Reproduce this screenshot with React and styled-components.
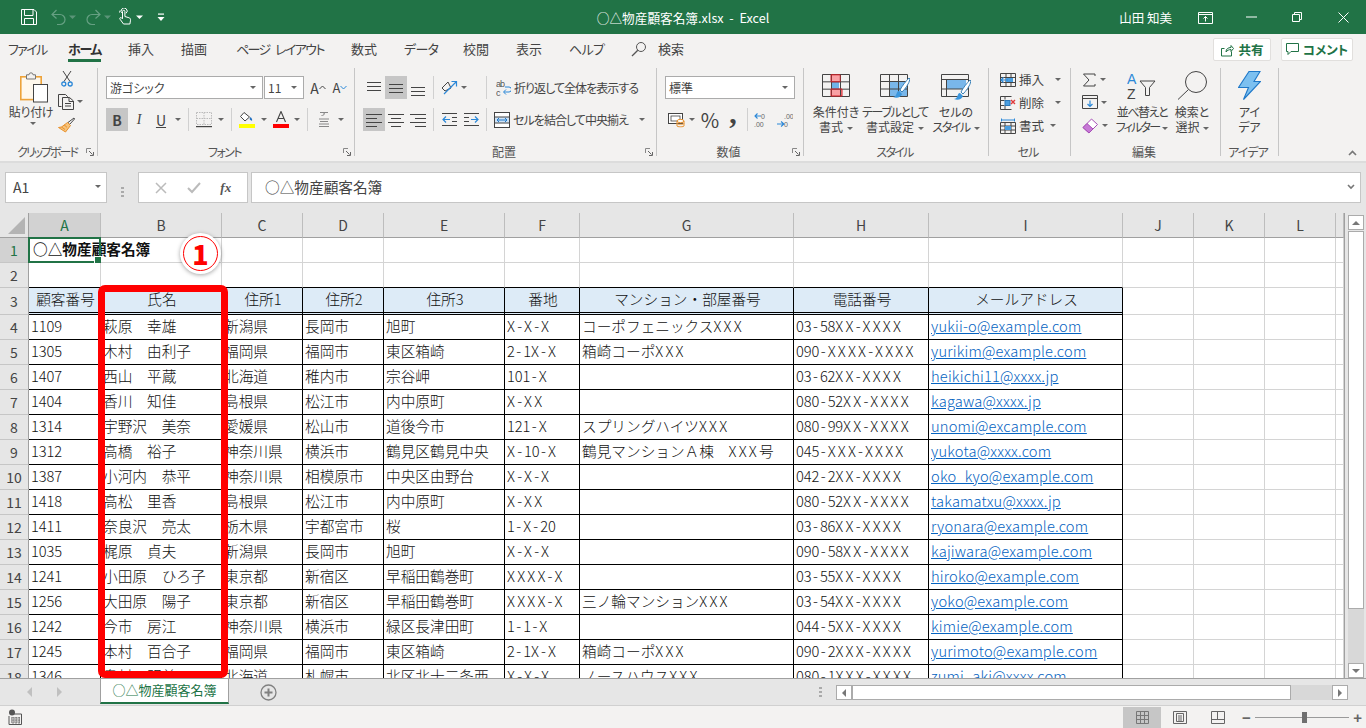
import React from "react";
import styled, { createGlobalStyle } from "styled-components";

const UI = `"Noto Sans CJK JP", "Noto Sans", sans-serif`;
const GREEN = "#217346";

const Global = createGlobalStyle`
  html, body { margin: 0; padding: 0; overflow: hidden; background: #e6e6e6; }
  * { box-sizing: border-box; }
`;

const Page = styled.div`
  width: 1366px; height: 728px; position: relative; overflow: hidden;
  display: flex; flex-direction: column;
  font-family: ${UI}; font-size: 12px; color: #444;
  font-feature-settings: "palt";
`;
const Kana = styled.span`letter-spacing: ${p => p.$ls ?? -1.5}px;`;

/* ---------- title bar ---------- */
const TitleBar = styled.header`
  height: 34px; flex: none; background: ${GREEN}; color: #fff;
  display: grid; grid-template-columns: 1fr auto 1fr; align-items: center;
`;
const Qat = styled.div`display: flex; align-items: center; padding-left: 21px;`;
const QatSlot = styled.span`display: flex; margin-left: ${p => p.$ml || 0}px;`;
const TitleText = styled.div`font-size: 12.67px; white-space: pre; font-feature-settings: normal;`;
const TitleRight = styled.div`display: flex; align-items: center; justify-content: flex-end;`;
const UserName = styled.span`font-size: 12.5px; margin-right: 10px;`;
const WinBtn = styled.span`width: 46px; height: 34px; display: flex; align-items: center; justify-content: center;`;

/* ---------- tabs ---------- */
const TabRow = styled.nav`
  height: 32px; flex: none; background: #f3f2f1; display: flex; align-items: flex-start; padding-left: 8px;
`;
const Tab = styled.span`
  width: ${p => p.$w}px; height: 28px; flex: none; font-size: 13px; line-height: 30px; white-space: nowrap; color: #444;
`;
const TabLabel = styled.span`
  display: inline-block; height: 28px;
  font-weight: ${p => (p.$on ? 700 : 400)}; color: ${p => (p.$on ? "#333" : "#444")};
  letter-spacing: ${p => p.$ls || 0}px; word-spacing: 4px;
  border-bottom: 3px solid ${p => (p.$on ? GREEN : "transparent")};
`;
const TabIcon = styled.span`width: 27px; flex: none; margin-top: 7px; display: flex;`;
const ShareArea = styled.div`margin-left: auto; display: flex; gap: 10px; padding: 4px 13px 0 0;`;
const ShareBtn = styled.span`
  height: 23px; width: ${p => p.$w}px; background: #fff; border: 1px solid #e1dfdd; border-radius: 2px;
  display: flex; align-items: center; justify-content: center; gap: 4px;
  font-weight: 700; font-size: 12.5px; color: ${p => p.$c};
`;

/* ---------- ribbon ---------- */
const Ribbon = styled.section`
  height: 95px; flex: none; background: #f3f2f1; display: flex; padding: 2px 0 5px; position: relative;
`;
const Group = styled.div`
  width: ${p => p.$w}px; height: 88px; flex: none; border-right: 1px solid #c6c6c6;
  display: grid; grid-template-rows: 76px 12px;
`;
const GroupBody = styled.div`
  display: flex; padding: ${p => p.$pad || "0"}; flex-direction: ${p => p.$dir || "row"};
`;
const GroupLabel = styled.div`
  display: grid; grid-template-columns: 1fr auto 1fr; align-items: center; height: 16px; line-height: 16px;
  font-size: 12px; color: #555; padding-right: 3px; white-space: nowrap;
`;
const LabelText = styled.span`grid-column: 2; letter-spacing: ${p => p.$ls || 0}px;`;
const Launcher = styled.span`justify-self: end; display: flex;`;
const Rows = styled.div`display: flex; flex-direction: column; gap: 9px;`;
const ToolRow = styled.div`display: flex; align-items: center; height: 23px;`;
const Btn = styled.span`
  width: ${p => p.$w || 22}px; height: 23px; flex: none; display: flex; align-items: center; justify-content: center;
  background: ${p => (p.$on ? "#c6c6c6" : "transparent")}; color: #444;
  margin-left: ${p => p.$ml || 0}px;
`;
const BtnText = styled.span`
  font-family: ${p => (p.$serif ? `"Liberation Serif", serif` : UI)};
  font-size: ${p => p.$s || 14}px; font-weight: ${p => (p.$b ? 700 : 400)};
  font-style: ${p => (p.$i ? "italic" : "normal")};
  text-decoration: ${p => (p.$u ? "underline" : "none")};
`;
const CommaText = styled.span`
  font-family: "Liberation Serif", serif; font-size: 30px; font-weight: 700; line-height: 23px; height: 23px; margin-top: -14px; color: #444;
`;
const CaretBox = styled.span`
  width: ${p => p.$w || 12}px; height: 23px; flex: none; display: flex; align-items: center; justify-content: center;
  margin-left: ${p => p.$ml || 0}px;
`;
const Caret = styled.i`
  display: inline-block; width: 0; height: 0; flex: none; vertical-align: middle;
  border-left: 3px solid transparent; border-right: 3px solid transparent; border-top: 3px solid #666;
  margin-left: ${p => p.$ml || 0}px;
`;
const VSep = styled.span`
  width: 1px; height: 23px; flex: none; background: #d0d0d0; margin: 0 ${p => p.$r ?? 4}px 0 ${p => p.$l ?? 4}px;
`;
const Select = styled.span`
  width: ${p => p.$w}px; height: 23px; background: #fff; border: 1px solid #ababab; flex: none;
  display: flex; align-items: center; padding: 0 4px 0 3px; margin-left: ${p => p.$ml || 0}px;
  font-size: 12px; color: #444;
  i { margin-left: auto; margin-right: 2px; }
`;
const TextBtn = styled.span`
  display: flex; align-items: center; gap: 3px; white-space: nowrap; font-size: 12px; color: #444;
  letter-spacing: -0.95px; margin-left: ${p => p.$ml || 0}px;
`;
const PasteBtn = styled.div`
  width: 50px; flex: none; display: flex; flex-direction: column; align-items: center; padding-top: 4px;
  line-height: 15px; font-size: 12px; color: #444; white-space: nowrap;
`;
const PasteIconWrap = styled.span`display: flex; margin-left: 5px;`;
const PasteLabel = styled.span`margin-top: 1px; letter-spacing: -0.3px;`;
const PasteCaret = styled.span`display: flex; margin-top: 3px; margin-left: 3px;`;
const SmallCol = styled.div`
  display: flex; flex-direction: column; padding-top: ${p => p.$pt || 2}px; gap: ${p => p.$gap || 6}px;
  margin-left: ${p => p.$ml || 0}px; width: ${p => (p.$w ? `${p.$w}px` : "auto")}; flex: none;
`;
const SmallItem = styled.span`display: flex; align-items: center; height: 17px;`;
const CutSlot = styled.span`display: flex; padding-left: 3px;`;
const BigBtn = styled.div`
  width: ${p => p.$w}px; flex: none; display: flex; flex-direction: column; align-items: center; padding-top: ${p => p.$pt ?? 6}px;
  font-size: 12px; line-height: 15px; color: #444; text-align: center; white-space: nowrap;
`;
const BigLabel = styled.div`margin-top: ${p => p.$mt ?? 6}px;`;
const CellRow = styled.div`
  display: flex; align-items: center; height: 23px; gap: 3px; font-size: 12.5px; color: #444; white-space: nowrap;
`;
const Collapse = styled.span`position: absolute; right: 9px; bottom: 5px; display: flex;`;

/* ---------- formula bar ---------- */
const FormulaStrip = styled.div`
  height: 52px; flex: none; background: #e6e6e6; display: flex;
  border-top: 2px solid #dcdcdc; padding: 9px 5px 0;
`;
const Box = styled.div`
  height: 31px; background: #fff; border: 1px solid #c6c6c6; display: flex; align-items: center;
`;
const NameBox = styled(Box)`
  width: 102px; padding: 0 5px 2px 7px; justify-content: space-between; font-size: 14px; color: #444;
`;
const Dots = styled.span`
  width: 31px; display: flex; align-items: center; justify-content: center; flex: none;
`;
const FxBox = styled(Box)`
  width: 110px; justify-content: space-around; padding: 0 6px; margin-right: 3px;
`;
const FxText = styled.span`font-family: "Liberation Serif", serif; font-style: italic; font-weight: 700; font-size: 13px; color: #555;`;
const FormulaInput = styled(Box)`
  flex: 1; padding: 0 5px 2px 13px; font-size: 14.67px; color: #444; font-feature-settings: normal;
  justify-content: space-between;
`;

/* ---------- sheet ---------- */
const SheetArea = styled.div`
  height: 466px; flex: none; display: flex; position: relative; background: #e6e6e6;
  border-bottom: 1px solid #a0a0a0;
`;
const Grid = styled.div`
  width: 1345px; flex: none; background: #fff; border-right: 1px solid #a0a0a0; overflow: hidden;
  font-size: 14.67px; color: #111; font-feature-settings: normal; font-weight: 300;
`;
const COLS = "29px 72px 121px 81px 81px 121px 75px 214px 135px 194px 71px 71px 71px 8px";
const Row = styled.div`
  display: grid; grid-template-columns: ${COLS}; height: ${p => p.$h || 25}px;
`;
const ColHead = styled.div`
  background: ${p => (p.$sel ? "#d2d2d2" : "#e6e6e6")}; color: ${p => (p.$sel ? GREEN : "#444")};
  border-right: 1px solid #bdbdbd; border-bottom: 1px solid #a0a0a0;
  display: flex; align-items: center; justify-content: center; font-size: 14px; font-weight: 400;
`;
const Corner = styled(ColHead)`
  border-right: 1px solid #a0a0a0; align-items: flex-end; justify-content: flex-end; padding: 0 3px 3px 0;
`;
const RowHead = styled.div`
  background: ${p => (p.$sel ? "#d2d2d2" : "#e6e6e6")}; color: ${p => (p.$sel ? GREEN : "#444")};
  border-right: 1px solid #a0a0a0; border-bottom: 1px solid #c6c6c6;
  display: flex; align-items: center; justify-content: center; font-size: 14px; font-weight: 400;
`;
const Cell = styled.div`
  position: relative; white-space: nowrap; line-height: 22px;
  padding: 0 0 0 ${p => p.$pl ?? 2}px;
  overflow: ${p => (p.$spill ? "visible" : "hidden")};
  font-weight: ${p => (p.$b ? 700 : "inherit")};
  text-align: ${p => (p.$head ? "center" : "left")};
  background: ${p => (p.$head ? "#ddebf7" : "transparent")};
  border-right: 1px solid ${p => (p.$t ? "#000" : "#d4d4d4")};
  border-bottom: ${p => (p.$dbl ? "3px double #000" : `1px solid ${p.$bt ? "#000" : "#d4d4d4"}`)};
`;
const Run = styled.span`
  letter-spacing: ${p => p.$ls || 0}px; padding: 0 ${p => p.$pr || 0}px 0 ${p => p.$pl || 0}px;
`;
const Link = styled.span`color: #0563c1; text-decoration: underline; letter-spacing: 0.2px;`;
const Selection = styled.span`
  position: absolute; left: -1px; top: -1px; right: -1px; bottom: -1px; border: 2px solid ${GREEN}; pointer-events: none;
  &::after {
    content: ""; position: absolute; right: -3px; bottom: -3px; width: 6px; height: 6px;
    background: ${GREEN}; border: 1px solid #fff;
  }
`;
const VScroll = styled.div`
  flex: 1; padding: 2px 2px 0 3px; display: flex; flex-direction: column; background: #e6e6e6;
`;
const ScrollBtn = styled.span`
  height: 15px; flex: none; background: #fff; border: 1px solid #ababab; display: flex; align-items: center; justify-content: center;
`;
const VThumb = styled.span`height: 378px; flex: none; background: #fff; border: 1px solid #ababab; margin-top: 1px;`;
const VTrack = styled.span`flex: 1; background: #d8d8d8;`;
const RedBox = styled.div`
  position: absolute; left: 98px; top: 72px; width: 130px; height: 393px;
  border: 7px solid #ff0000; border-radius: 7px; pointer-events: none;
`;
const Badge = styled.div`
  position: absolute; left: 180px; top: 20px; width: 41px; height: 41px; border-radius: 50%;
  background: #fff; box-shadow: 0 1px 4px rgba(0,0,0,.35);
  display: flex; align-items: center; justify-content: center;
  &::before { content: ""; position: absolute; inset: 3px; border-radius: 50%; border: 1.5px solid #ff0000; }
  color: #ff0000; font-weight: 900; font-size: 27px; line-height: 1;
`;

/* ---------- sheet tabs ---------- */
const SheetBar = styled.div`
  height: 27px; flex: none; background: #e6e6e6; display: flex; align-items: flex-start;
  border-bottom: 1px solid #d0d0d0;
`;
const NavArrows = styled.div`
  width: 100px; height: 26px; flex: none; display: flex; align-items: center; padding-left: 27px; gap: 25px;
`;
const SheetTab = styled.div`
  width: 129px; height: 25px; flex: none; background: #fff; color: ${GREEN}; font-size: 13px; text-align: center; line-height: 22px;
  border-left: 1px solid #a0a0a0; border-right: 1px solid #a0a0a0; border-bottom: 2px solid ${GREEN};
  font-feature-settings: normal;
`;
const AddSheet = styled.span`margin: 5px 0 0 31px; display: flex;`;
const SheetDots = styled.span`margin: 8px 0 0 542px; width: 17px; display: flex; justify-content: flex-start;`;
const HScroll = styled.div`
  width: 512px; height: 15px; margin: 6px 0 0 0; display: flex; background: #d8d8d8;
`;
const HScrollBtn = styled(ScrollBtn)`width: 16px;`;
const HThumb = styled.span`width: 439px; background: #fff; border: 1px solid #ababab; flex: none;`;
const HTrack = styled.span`flex: 1;`;

/* ---------- status ---------- */
const StatusBar = styled.footer`
  flex: 1; background: #f3f2f1; display: flex; align-items: center; padding-left: 8px;
`;
const ViewBtn = styled.span`
  width: 38px; height: 21px; flex: none; display: flex; align-items: center; justify-content: center;
  background: ${p => (p.$on ? "#c6c6c6" : "transparent")};
`;
const Views = styled.div`margin-left: auto; display: flex; align-items: center;`;
const ZoomArea = styled.div`
  width: 129px; height: 21px; display: flex; align-items: center; position: relative; padding: 0 4px 0 5px;
`;
const ZoomLine = styled.span`flex: 1; height: 1px; background: #9a9a9a; margin: 0 4px; position: relative;`;
const ZoomThumb = styled.span`
  position: absolute; left: 47px; top: -5px; width: 5px; height: 11px; background: #6f6f6f;
`;
const ZoomSign = styled.span`font-size: 15px; font-weight: 700; color: #666; line-height: 1; font-family: "Liberation Sans", sans-serif;`;

/* ---------- icons ---------- */
const Svg = styled.svg`display: block; flex: none;`;
const Ic = ({ w = 16, h = 16, children, ...r }) => (
  <Svg width={w} height={h} viewBox={`0 0 ${w} ${h}`} fill="none" {...r}>{children}</Svg>
);
const D = "#444";
const SaveI = () => <Ic><path d="M.5.5h12.5l2.5 2.5v12.5H.5z M3.5.5v6h8.5v-6 M3.5 15.5v-6h9v6" stroke="#fff" /></Ic>;
const UndoI = ({ flip }) => (
  <Ic w={15} h={17} style={flip ? { transform: "scaleX(-1)" } : undefined}>
    <path d="M5.5 1 1 5.5l4.5 4 M1.5 5.5h7.5a4.8 4.8 0 0 1 0 10H6" stroke="#66a083" strokeWidth="1.2" />
  </Ic>
);
const TouchI = () => (
  <Ic w={14} h={18}>
    <path d="M4.5 5.5a3 3 0 1 1 3.5-.2M1.5 4.5a4.5 4 0 0 1 .6-2" stroke="#fff" />
    <path d="M4.5 3.5a1.2 1.2 0 0 1 2.4 0v5l4 1.2c1.3.4 1.8 1.3 1.6 2.5l-.6 3.8H5.5L2 11.2c-.8-1.2.6-2.2 1.6-1.3l.9.9z" stroke="#fff" />
  </Ic>
);
const QCaret = ({ c = "#fff" }) => <Ic w={8} h={5}><path d="M0 .5h7L3.5 4z" fill={c} /></Ic>;
const CustomizeI = () => <Ic w={8} h={9}><path d="M.5 4h7L4 8z" fill="#fff" /><rect x="1" y=".5" width="6" height="1.2" fill="#fff" /></Ic>;
const RibbonOpt = () => <Ic w={15} h={13}><path d="M.5 1.5h14v11H.5zM.5 3.5h14M7.5 10.5v-5M5.5 7.5l2-2 2 2" stroke="#fff" /></Ic>;
const MinI = () => <Ic w={11} h={2}><rect y=".5" width="11" height="1" fill="#fff" /></Ic>;
const RestoreI = () => <Ic w={10} h={10}><path d="M.5 2.5h7v7h-7zM2.5 2.5v-2h7v7h-2" stroke="#fff" /></Ic>;
const CloseI = () => <Ic w={11} h={11}><path d="M.5.5l10 10M10.5.5l-10 10" stroke="#fff" /></Ic>;
const SearchI = () => <Ic><circle cx="10" cy="6" r="4.5" stroke="#555" /><path d="M6.8 9.2 1 15" stroke="#555" strokeWidth="1.3" /></Ic>;
const ShareI = () => <Ic w={14} h={14}><path d="M11.5 8.5v4.5h-10V5.5h3M6 9c0-3 2-4.5 5-4.5V2.5l2.5 3-2.5 3V6.5C9 6.5 7 7.5 6 9z" stroke={GREEN} /></Ic>;
const CommentI = () => <Ic w={13} h={13}><path d="M.5.5h12v8H5l-3 3v-3H.5z" stroke={GREEN} /></Ic>;
const PasteI = () => (
  <Ic w={28} h={31}>
    <rect x=".8" y="4.8" width="20.4" height="22.8" fill="#fff8ec" stroke="#eda33a" strokeWidth="1.6" />
    <path d="M6.5 7V2.8H9a2 2 0 0 1 4 0h2.5V7z" fill="#f3f2f1" stroke="#777" />
    <rect x="13.5" y="12.5" width="14" height="17.5" fill="#fff" stroke="#444" />
  </Ic>
);
const CutI = () => (
  <Ic w={12} h={17}>
    <path d="M2 1 9 11.5M10 1 3 11.5" stroke={D} />
    <circle cx="2.8" cy="14" r="2" stroke="#2b88d8" strokeWidth="1.3" /><circle cx="9.2" cy="14" r="2" stroke="#2b88d8" strokeWidth="1.3" />
  </Ic>
);
const CopyI = () => <Ic><path d="M.5.5h7l2 2V3M.5.5v12h3" stroke={D} /><path d="M4.5 3.5h7l4 3.5v8.5h-11z M11 3.5v4h4M7 9.5h6M7 12h6" stroke={D} /></Ic>;
const BrushI = () => (
  <Ic w={17} h={16}>
    <path d="M16 1 10 5.5l1.5 2L16.5 2z" stroke={D} fill="#fff" />
    <path d="M9.5 5.5l3 3-5 6.5-7-4.5 3-.5z" fill="#f6c27a" stroke="#e8912c" />
    <path d="M3.5 10 7 12.5M6 7.8l3 2.5" stroke="#e8912c" />
  </Ic>
);
const Launch = () => <Ic w={8} h={8}><path d="M.5 5V.5H5" stroke="#888" /><path d="M3 3l3.5 3.5M7.5 4v3.5H4" stroke="#666" /></Ic>;
const Grow = ({ up }) => <Ic w={7} h={5}><path d={up ? "M.5 4 3.5 1l3 3" : "M.5 1l3 3 3-3"} stroke={up ? "#444" : "#2b88d8"} /></Ic>;
const BorderI = () => (
  <Ic>
    <path d="M.5.5h15v12H.5zM8 .5v12M.5 6.5h15" stroke="#bbb" strokeDasharray="1.5 1" />
    <rect y="14" width="16" height="1.2" fill={D} />
  </Ic>
);
const FillI = () => (
  <Ic w={16} h={17}>
    <path d="M5 1.5 1.5 5.5 6 10l4.5-4z" stroke={D} fill="#fff" />
    <path d="M11.5 6c1.5 1.5 2 3 1.5 3.5s-2-.5-2.5-1.5z" fill="#1f6fc0" />
    <rect y="13" width="16" height="4" fill="#ffff00" />
  </Ic>
);
const FontColorI = () => (
  <Ic w={16} h={17}>
    <path d="M3.5 11 8 .5 12.5 11M5 7.5h6" stroke={D} strokeWidth="1.1" />
    <rect y="13" width="16" height="4" fill="#ff0000" />
  </Ic>
);
const PhoneticI = () => (
  <Ic w={14} h={17}>
    <path d="M3 1.5h8M7 1.5v2M4.5 4.5c1.5 0 2.5-.5 3-2" stroke="#888" />
    <path d="M2 8h10M3 10.5h8M2 13h10" stroke="#888" /><rect x="2" y="15" width="10" height="1" fill="#888" />
  </Ic>
);
const lines = (arr) => arr.map((l, i) => <rect key={i} x={l[0]} y={l[1]} width={l[2]} height="1" fill={D} />);
const AlignI = ({ kind }) => {
  const m = {
    top: [[1, 2, 14], [1, 6, 14], [1, 10, 14]],
    mid: [[1, 4, 14], [1, 8, 14], [1, 12, 14]],
    bot: [[1, 7, 14], [1, 11, 14], [1, 15, 14]],
    left: [[0, 2, 16], [0, 6, 11], [0, 10, 16], [0, 14, 11]],
    center: [[0, 2, 16], [3, 6, 10], [0, 10, 16], [3, 14, 10]],
    right: [[0, 2, 16], [5, 6, 11], [0, 10, 16], [5, 14, 11]],
  };
  return <Ic>{lines(m[kind])}</Ic>;
};
const OrientI = () => (
  <Ic w={17} h={17}>
    <path d="M1 9 7 3l3 6-6 3z" stroke={D} />
    <path d="M3 15 15 3M10.5 2.5H15.5V7.5" stroke="#2b88d8" strokeWidth="1.2" />
  </Ic>
);
const IndentI = ({ inc }) => (
  <Ic w={15} h={13} style={inc ? { transform: "scaleX(-1)" } : undefined}>
    <path d="M1 6.5h7M4 3.5l-3 3 3 3" stroke="#2b88d8" strokeWidth="1.2" />
    <path d="M0 .5h15M10 4.5h5M10 8.5h5M0 12.5h15" stroke={D} />
  </Ic>
);
const WrapI = () => (
  <Ic w={15} h={18}>
    <text x="0" y="8" fontSize="9" fill="#555" fontFamily="Liberation Sans">ab</text>
    <text x="0" y="17" fontSize="9" fill="#555" fontFamily="Liberation Sans">c</text>
    <path d="M7 14h5a2.5 2.5 0 0 0 0-5H8M9 11.5 6.5 14 9 16.5" stroke="#2b88d8" transform="translate(1 -1)" />
  </Ic>
);
const MergeI = () => (
  <Ic w={16} h={16}>
    <rect x=".5" y=".5" width="15" height="15" stroke={D} fill="#fff" />
    <rect x="1" y="5" width="14" height="6" fill="#cfe3f6" /><path d="M.5 5h15M.5 11h15" stroke={D} />
    <path d="M3 8h10M5 6l-2 2 2 2M11 6l2 2-2 2" stroke="#1f78c8" />
  </Ic>
);
const CurrencyI = () => (
  <Ic w={17} h={17}>
    <rect x=".5" y="2.5" width="14" height="10" fill="#fff" stroke={D} />
    <rect x="3" y="5" width="9" height="5" stroke={D} strokeWidth=".8" />
    <ellipse cx="12.5" cy="10" rx="3.5" ry="1.6" fill="#fff" stroke="#e8912c" />
    <path d="M9 10v5c0 1 7 1 7 0v-5M9 12.5c0 1 7 1 7 0" stroke="#e8912c" fill="none" />
  </Ic>
);
const DecimalI = ({ inc }) => (
  <Ic w={16} h={16}>
    <text x="7" y="7" fontSize="7" fill="#666" fontFamily="Liberation Sans">{inc ? ".00" : "0"}</text>
    <text x={inc ? 7 : 0} y="15" fontSize="7" fill="#666" fontFamily="Liberation Sans">{inc ? "0" : ".00"}</text>
    <path d={inc ? "M0 12h7M4 9.5 7 12l-3 2.5" : "M1 4h6M3.5 1.5 1 4l2.5 2.5"} stroke="#2b88d8" strokeWidth="1.1" />
  </Ic>
);
const CondI = () => (
  <Ic w={28} h={23}>
    <rect x="9" y="1" width="8" height="7" fill="#f9a0a4" /><rect x="9" y="8" width="8" height="7" fill="#6fb3e8" /><rect x="9" y="15" width="11" height="7" fill="#f9a0a4" />
    <path d="M.5.5h27v22H.5zM.5 7.833h27M.5 15.167h27M9.5.5v22M18.5.5v22" stroke={D} />
    <path d="M9 .8h9v7H9zM9 15h11v7H9z" stroke="#d91d24" />
  </Ic>
);
const TableI = () => (
  <Ic w={30} h={26}>
    <rect x="9" y="8" width="18" height="14" fill="#79b7ea" />
    <path d="M.5.5h27v22H.5zM.5 7.5h27M.5 15h27M9.5.5v22M18.5.5v22" stroke={D} />
    <path d="M29 4c-3 3-7 8-9 12l2 2c3-3 7-8 8-13z" fill="#fff" stroke="#3b82b8" />
    <path d="M19 17c-2 0-2 2-3 4-.5 1-2 2-3 2 4 2 8 0 9-3z" fill="#3a96dd" />
  </Ic>
);
const CellStyleI = () => (
  <Ic w={30} h={27}>
    <rect x="5" y="6" width="20" height="9" fill="#79b7ea" />
    <path d="M.5.5h27v22H.5zM.5 5.5h27M.5 15h27M5.5 5.5v17" stroke={D} />
    <path d="M29 6c-3 3-7 8-9 12l2 2c3-3 7-8 8-13z" fill="#fff" stroke="#3b82b8" />
    <path d="M19 19c-2 0-2 2-3 4-.5 1-2 2-3 2 4 2 8 0 9-3z" fill="#3a96dd" />
  </Ic>
);
const InsertI = () => (
  <Ic w={16} h={14}>
    <path d="M.5.5h15v13H.5zM.5 4.5h15M.5 9.5h15M6 .5v13M11 .5v13" stroke={D} />
    <rect x="6" y="5" width="7" height="4" fill="#4a9ee0" />
    <path d="M1 7h7M3.5 4.5 1 7l2.5 2.5" stroke="#2b88d8" strokeWidth="1.2" fill="#f3f2f1" />
  </Ic>
);
const DeleteI = () => (
  <Ic w={16} h={14}>
    <path d="M.5.5h11M.5 13.5h11M.5.5v13M5 .5v3M5 10v3.5M.5 4.5h4M.5 9.5h4" stroke={D} />
    <rect x="5" y="4.5" width="5" height="5" fill="#4a9ee0" stroke="#2b78b8" />
    <path d="M11 4l4 4M15 4l-4 4" stroke="#e03a3a" strokeWidth="1.4" />
  </Ic>
);
const FormatI = () => (
  <Ic w={16} h={16}>
    <path d="M1.5.5v3M14.5.5v3M1.5 2h13" stroke="#2b88d8" />
    <path d="M.5 4.5h15v11H.5zM.5 8h15M.5 12h15M5 4.5v11M11 4.5v11" stroke={D} />
    <rect x="5" y="8" width="6" height="4" fill="#4a9ee0" />
  </Ic>
);
const SigmaI = () => <Ic w={14} h={14}><path d="M13 3V1H1.5L7 7l-5.5 6H13v-2" stroke={D} /></Ic>;
const FillDownI = () => <Ic w={16} h={15}><path d="M.5.5h15v13H.5zM.5 3.5h15" stroke={D} /><path d="M8 5.5v6M5.5 9 8 11.5 10.5 9" stroke="#2b88d8" strokeWidth="1.2" /></Ic>;
const EraserI = () => (
  <Ic w={17} h={16}>
    <path d="M1 9.5 9.5 1l6 5.5L7 15z" fill="#fff" stroke="#a64fb6" />
    <path d="M1 9.5 5 5.5l6 5.5-4 4z" fill="#c778d6" stroke="#a64fb6" />
  </Ic>
);
const SortI = () => (
  <Ic w={30} h={28}>
    <text x="0" y="12" fontSize="14" fill="#2b88d8" fontFamily="Liberation Sans">A</text>
    <text x="0" y="27" fontSize="14" fill={D} fontFamily="Liberation Sans">Z</text>
    <path d="M13 9h15l-5.5 6.5v8h-4v-8z" stroke={D} />
  </Ic>
);
const FindI = () => (
  <Ic w={31} h={29}>
    <circle cx="19" cy="11" r="10.5" stroke={D} />
    <path d="M11.5 18.5 1 28.5" stroke={D} />
  </Ic>
);
const IdeaI = () => (
  <Ic w={23} h={29}>
    <path d="M11 .5h11l-6 10h6.5L5.5 28.5l5-12H.5z" fill="#7cc0f0" stroke="#1f78c8" strokeWidth="1.1" />
  </Ic>
);
const Triangle = () => <Ic w={17} h={17}><path d="M17 0v17H0z" fill="#b4b4b4" /></Ic>;
const Tri = ({ dir, c = "#777", s = 4 }) => {
  const d = { up: `M0 ${s}H${s * 2}L${s} 0z`, down: `M0 0H${s * 2}L${s} ${s}z`, left: `M${s} 0V${s * 2}L0 ${s}z`, right: `M0 0V${s * 2}L${s} ${s}z` }[dir];
  const hor = dir === "left" || dir === "right";
  return <Ic w={hor ? s : s * 2} h={hor ? s * 2 : s}><path d={d} fill={c} /></Ic>;
};
const XI = () => <Ic w={12} h={12}><path d="M1 1l10 10M11 1 1 11" stroke="#bbb" strokeWidth="1.5" /></Ic>;
const CheckI = () => <Ic w={14} h={12}><path d="M1 6l4 4 8-9" stroke="#bbb" strokeWidth="2" /></Ic>;
const ChevronI = () => <Ic w={8} h={6}><path d="M1 1l3 3 3-3" stroke="#777" strokeWidth="1.6" /></Ic>;
const CollapseI = () => <Ic w={9} h={6}><path d="M1 5l3.5-3.5L8 5" stroke="#777" strokeWidth="1.6" /></Ic>;
const VDots = () => <Ic w={3} h={11}><path d="M0 0h3v2H0zM0 4h3v2H0zM0 8h3v2H0z" fill="#aaa" /></Ic>;
const AddI = () => (
  <Ic w={17} h={17}>
    <circle cx="8.5" cy="8.5" r="7.5" stroke="#808080" strokeWidth="1.3" />
    <path d="M4.5 8.5h8M8.5 4.5v8" stroke="#808080" strokeWidth="2" />
  </Ic>
);
const MacroI = () => (
  <Ic w={14} h={16}>
    <circle cx="4" cy="3.5" r="3" fill="#555" />
    <path d="M4 5h9.5v10.500H1V7" stroke="#555" />
    <path d="M3 9h9M3 11h9M3 13h9M5 8v7M8 8v7M11 8v7" stroke="#555" strokeDasharray="1 .6" />
  </Ic>
);
const NormalI = () => <Ic w={13} h={13}><path d="M.5.5h12v12H.5zM.5 4.5h12M.5 8.5h12M4.5.5v12M8.5.5v12" stroke="#777" /></Ic>;
const PageI = () => <Ic w={14} h={13}><path d="M.5.5h13v12H.5z M3.5 2.5h7v8h-7zM5 5h4M5 7h4M5 9h4" stroke="#666" /></Ic>;
const BreakI = () => <Ic w={14} h={13}><path d="M.5.5h13v12H.5zM.5 8.5h13M6.5.5v8" stroke="#666" /></Ic>;

/* ---------- data ---------- */
const COL_NAMES = ["A", "B", "C", "D", "E", "F", "G", "H", "I", "J", "K", "L", ""];
const HEAD = ["顧客番号", "氏名", "住所1", "住所2", "住所3", "番地", "マンション・部屋番号", "電話番号", "メールアドレス"];
const DATA = [
  [4, "1109", "萩原　幸雄", "新潟県", "長岡市", "旭町", "X-X-X", "コーポフェニックスXXX", "03-58XX-XXXX", "yukii-o@example.com"],
  [5, "1305", "木村　由利子", "福岡県", "福岡市", "東区箱崎", "2-1X-X", "箱崎コーポXXX", "090-XXXX-XXXX", "yurikim@example.com"],
  [6, "1407", "西山　平蔵", "北海道", "稚内市", "宗谷岬", "101-X", "", "03-62XX-XXXX", "heikichi11@xxxx.jp"],
  [7, "1404", "香川　知佳", "島根県", "松江市", "内中原町", "X-XX", "", "080-52XX-XXXX", "kagawa@xxxx.jp"],
  [8, "1314", "宇野沢　美奈", "愛媛県", "松山市", "道後今市", "121-X", "スプリングハイツXXX", "080-99XX-XXXX", "unomi@excample.com"],
  [9, "1312", "高橋　裕子", "神奈川県", "横浜市", "鶴見区鶴見中央", "X-10-X", "鶴見マンションＡ棟　XXX号", "045-XXX-XXXX", "yukota@xxxx.com"],
  [10, "1387", "小河内　恭平", "神奈川県", "相模原市", "中央区由野台", "X-X-X", "", "042-2XX-XXXX", "oko_kyo@example.com"],
  [11, "1418", "高松　里香", "島根県", "松江市", "内中原町", "X-XX", "", "080-52XX-XXXX", "takamatxu@xxxx.jp"],
  [12, "1411", "奈良沢　亮太", "栃木県", "宇都宮市", "桜", "1-X-20", "", "03-86XX-XXXX", "ryonara@example.com"],
  [13, "1035", "梶原　貞夫", "新潟県", "長岡市", "旭町", "X-X-X", "", "090-58XX-XXXX", "kajiwara@example.com"],
  [14, "1241", "小田原　ひろ子", "東京都", "新宿区", "早稲田鶴巻町", "XXXX-X", "", "03-55XX-XXXX", "hiroko@example.com"],
  [15, "1256", "大田原　陽子", "東京都", "新宿区", "早稲田鶴巻町", "XXXX-X", "三ノ輪マンションXXX", "03-54XX-XXXX", "yoko@example.com"],
  [16, "1242", "今市　房江", "神奈川県", "横浜市", "緑区長津田町", "1-1-X", "", "044-5XX-XXXX", "kimie@example.com"],
  [17, "1245", "本村　百合子", "福岡県", "福岡市", "東区箱崎", "2-1X-X", "箱崎コーポXXX", "090-2XXX-XXXX", "yurimoto@example.com"],
  [18, "1346", "泉村　明美", "北海道", "札幌市", "北区北十二条西", "X-X-X", "ノースハウスXXX", "080-1XXX-XXXX", "zumi_aki@xxxx.com"],
];
const TABS = [["ファイル", 60, -1.6], ["ホーム", 60, -1.4], ["挿入", 53], ["描画", 55], ["ページ レイアウト", 115, -1.6], ["数式", 53], ["データ", 59, -.7], ["校閲", 53], ["表示", 53], ["ヘルプ", 62, -.6]];
const TITLE = "○△物産顧客名簿";

const Filler = ({ n, bt }) => Array.from({ length: n }, (_, i) => <Cell key={i} $bt={bt} />);
const Fit = ({ text }) => {
  const parts = text.split(/(X+|-|\d+)/);
  return parts.map((s, i) => {
    if (!(i % 2)) return s;
    if (s === "-") {
      const afterDigit = /\d/.test(parts[i - 2] || "");
      return <Run key={i} $pl={afterDigit ? 1.5 : 0} $pr={2}>-</Run>;
    }
    return <Run key={i} $ls={/\d/.test(s) ? -0.1 : 2.2}>{s}</Run>;
  });
};

export default function App() {
  return (
    <Page>
      <Global />
      <TitleBar>
        <Qat>
          <SaveI />
          <QatSlot $ml={14}><UndoI /></QatSlot>
          <QatSlot $ml={3}><QCaret c="#5b9478" /></QatSlot>
          <QatSlot $ml={9}><UndoI flip /></QatSlot>
          <QatSlot $ml={3}><QCaret c="#5b9478" /></QatSlot>
          <QatSlot $ml={6}><TouchI /></QatSlot>
          <QatSlot $ml={4}><QCaret /></QatSlot>
          <QatSlot $ml={13}><CustomizeI /></QatSlot>
        </Qat>
        <TitleText>{TITLE}.xlsx  -  Excel</TitleText>
        <TitleRight>
          <UserName>山田 知美</UserName>
          <WinBtn><RibbonOpt /></WinBtn>
          <WinBtn><MinI /></WinBtn>
          <WinBtn><RestoreI /></WinBtn>
          <WinBtn><CloseI /></WinBtn>
        </TitleRight>
      </TitleBar>

      <TabRow>
        {TABS.map(([t, w, ls], i) => <Tab key={t} $w={w}><TabLabel $on={i === 1} $ls={ls}>{t}</TabLabel></Tab>)}
        <TabIcon><SearchI /></TabIcon>
        <Tab $w={40}><TabLabel>検索</TabLabel></Tab>
        <ShareArea>
          <ShareBtn $w={58} $c={GREEN}><ShareI />共有</ShareBtn>
          <ShareBtn $w={72} $c={GREEN}><CommentI />コメント</ShareBtn>
        </ShareArea>
      </TabRow>

      <Ribbon>
        <Group $w={98}>
          <GroupBody $pad="0 0 0 6px">
            <PasteBtn>
              <PasteIconWrap><PasteI /></PasteIconWrap>
              <PasteLabel>貼り付け</PasteLabel>
              <PasteCaret><Caret /></PasteCaret>
            </PasteBtn>
            <SmallCol $ml={2}>
              <SmallItem><CutSlot><CutI /></CutSlot></SmallItem>
              <SmallItem><CopyI /><CaretBox $w={12}><Caret /></CaretBox></SmallItem>
              <SmallItem><BrushI /></SmallItem>
            </SmallCol>
          </GroupBody>
          <GroupLabel><LabelText $ls={-2}>クリップボード</LabelText><Launcher><Launch /></Launcher></GroupLabel>
        </Group>

        <Group $w={257}>
          <GroupBody $pad="8px 0 0 8px">
            <Rows>
              <ToolRow>
                <Select $w={157}>游ゴシック<Caret /></Select>
                <Select $w={40} $ml={1}>11<Caret /></Select>
                <Btn $ml={3}><BtnText $s={14}>A</BtnText><Grow up /></Btn>
                <Btn><BtnText $s={13}>A</BtnText><Grow /></Btn>
              </ToolRow>
              <ToolRow>
                <Btn $on><BtnText $b $s={14}>B</BtnText></Btn>
                <Btn><BtnText $i $serif $s={14}>I</BtnText></Btn>
                <Btn><BtnText $u $s={14}>U</BtnText></Btn>
                <CaretBox><Caret /></CaretBox>
                <VSep />
                <Btn><BorderI /></Btn>
                <CaretBox><Caret /></CaretBox>
                <VSep />
                <Btn><FillI /></Btn>
                <CaretBox><Caret /></CaretBox>
                <Btn><FontColorI /></Btn>
                <CaretBox $w={10}><Caret /></CaretBox>
                <VSep $l={5} $r={5} />
                <Btn><PhoneticI /></Btn>
                <CaretBox><Caret /></CaretBox>
              </ToolRow>
            </Rows>
          </GroupBody>
          <GroupLabel><LabelText $ls={-1.5}>フォント</LabelText><Launcher><Launch /></Launcher></GroupLabel>
        </Group>

        <Group $w={302}>
          <GroupBody $pad="8px 0 0 8px">
            <Rows>
              <ToolRow>
                <Btn><AlignI kind="top" /></Btn>
                <Btn $on><AlignI kind="mid" /></Btn>
                <Btn><AlignI kind="bot" /></Btn>
                <VSep />
                <Btn><OrientI /></Btn>
                <CaretBox $w={8}><Caret /></CaretBox>
                <VSep $l={18} $r={9} />
                <TextBtn><WrapI />折り返して全体を表示する</TextBtn>
              </ToolRow>
              <ToolRow>
                <Btn $on><AlignI kind="left" /></Btn>
                <Btn><AlignI kind="center" /></Btn>
                <Btn><AlignI kind="right" /></Btn>
                <VSep />
                <Btn><IndentI /></Btn>
                <Btn><IndentI inc /></Btn>
                <VSep $r={7} />
                <TextBtn><MergeI />セルを結合して中央揃え</TextBtn>
                <CaretBox $w={12} $ml={8}><Caret /></CaretBox>
              </ToolRow>
            </Rows>
          </GroupBody>
          <GroupLabel><LabelText>配置</LabelText><Launcher><Launch /></Launcher></GroupLabel>
        </Group>

        <Group $w={147}>
          <GroupBody $pad="8px 0 0 8px">
            <Rows>
              <ToolRow><Select $w={130}>標準<Caret /></Select></ToolRow>
              <ToolRow>
                <Btn><CurrencyI /></Btn>
                <CaretBox $w={10}><Caret /></CaretBox>
                <Btn $ml={2}><BtnText $s={20}>%</BtnText></Btn>
                <Btn $ml={1}><CommaText>,</CommaText></Btn>
                <VSep $l={3} $r={3} />
                <Btn><DecimalI /></Btn>
                <Btn $ml={1}><DecimalI inc /></Btn>
              </ToolRow>
            </Rows>
          </GroupBody>
          <GroupLabel><LabelText>数値</LabelText><Launcher><Launch /></Launcher></GroupLabel>
        </Group>

        <Group $w={185}>
          <GroupBody $pad="0 0 0 4px">
            <BigBtn $w={56}><CondI /><BigLabel $mt={7}>条件付き<br />書式<Caret $ml={4} /></BigLabel></BigBtn>
            <BigBtn $w={62}><TableI /><BigLabel $mt={4}><Kana $ls={-1.3}>テーブルとして</Kana><br />書式設定<Caret $ml={4} /></BigLabel></BigBtn>
            <BigBtn $w={60}><CellStyleI /><BigLabel $mt={3}>セルの<br /><Kana>スタイル</Kana><Caret $ml={4} /></BigLabel></BigBtn>
          </GroupBody>
          <GroupLabel><LabelText $ls={-1.7}>スタイル</LabelText></GroupLabel>
        </Group>

        <Group $w={82}>
          <GroupBody $dir="column" $pad="0 0 0 11px">
            <CellRow><InsertI />挿入<Caret $ml={8} /></CellRow>
            <CellRow><DeleteI />削除<Caret $ml={8} /></CellRow>
            <CellRow><FormatI />書式<Caret $ml={3} /></CellRow>
          </GroupBody>
          <GroupLabel><LabelText $ls={-1}>セル</LabelText></GroupLabel>
        </Group>

        <Group $w={150}>
          <GroupBody $pad="0 0 0 11px">
            <SmallCol $pt={3} $gap={6} $w={34}>
              <SmallItem><SigmaI /><CaretBox $w={14}><Caret /></CaretBox></SmallItem>
              <SmallItem><FillDownI /><CaretBox $w={12}><Caret /></CaretBox></SmallItem>
              <SmallItem><EraserI /><CaretBox $w={11}><Caret /></CaretBox></SmallItem>
            </SmallCol>
            <BigBtn $w={52} $pt={4}><SortI /><BigLabel $mt={4}><Kana $ls={-1.4}>並べ替えと</Kana><br /><Kana $ls={-1.8}>フィルター</Kana><Caret $ml={3} /></BigLabel></BigBtn>
            <BigBtn $w={48} $pt={3}><FindI /><BigLabel $mt={4}>検索と<br />選択<Caret $ml={3} /></BigLabel></BigBtn>
          </GroupBody>
          <GroupLabel><LabelText>編集</LabelText></GroupLabel>
        </Group>

        <Group $w={58}>
          <GroupBody>
            <BigBtn $w={57} $pt={3}><IdeaI /><BigLabel $mt={4}>アイ<br />デア</BigLabel></BigBtn>
          </GroupBody>
          <GroupLabel><LabelText $ls={-1}>アイデア</LabelText></GroupLabel>
        </Group>
        <Collapse><CollapseI /></Collapse>
      </Ribbon>

      <FormulaStrip>
        <NameBox>A1<Caret /></NameBox>
        <Dots><VDots /></Dots>
        <FxBox><XI /><CheckI /><FxText>fx</FxText></FxBox>
        <FormulaInput>{TITLE}<ChevronI /></FormulaInput>
      </FormulaStrip>

      <SheetArea>
        <Grid>
          <Row>
            <Corner><Triangle /></Corner>
            {COL_NAMES.map((c, i) => <ColHead key={i} $sel={c === "A"}>{c}</ColHead>)}
          </Row>
          <Row>
            <RowHead $sel>1</RowHead>
            <Cell $spill $b $pl={4}>{TITLE}<Selection /></Cell>
            <Filler n={12} />
          </Row>
          <Row>
            <RowHead>2</RowHead>
            <Filler n={9} bt />
            <Filler n={4} />
          </Row>
          <Row $h={27}>
            <RowHead>3</RowHead>
            {HEAD.map(h => <Cell key={h} $t $head $dbl>{h}</Cell>)}
            <Filler n={4} />
          </Row>
          {DATA.map(([n, ...vals]) => (
            <Row key={n}>
              <RowHead>{n}</RowHead>
              {vals.map((v, i) => (
                <Cell key={i} $t $bt>{i === 8 ? <Link>{v}</Link> : <Fit text={v} />}</Cell>
              ))}
              <Filler n={4} />
            </Row>
          ))}
        </Grid>
        <VScroll>
          <ScrollBtn><Tri dir="up" /></ScrollBtn>
          <VThumb />
          <VTrack />
          <ScrollBtn><Tri dir="down" /></ScrollBtn>
        </VScroll>
        <RedBox />
        <Badge>1</Badge>
      </SheetArea>

      <SheetBar>
        <NavArrows><Tri dir="left" c="#c0c0c0" s={5} /><Tri dir="right" c="#c0c0c0" s={5} /></NavArrows>
        <SheetTab>{TITLE}</SheetTab>
        <AddSheet><AddI /></AddSheet>
        <SheetDots><VDots /></SheetDots>
        <HScroll>
          <HScrollBtn><Tri dir="left" /></HScrollBtn>
          <HThumb />
          <HTrack />
          <HScrollBtn><Tri dir="right" /></HScrollBtn>
        </HScroll>
      </SheetBar>

      <StatusBar>
        <MacroI />
        <Views>
          <ViewBtn $on><NormalI /></ViewBtn>
          <ViewBtn><PageI /></ViewBtn>
          <ViewBtn><BreakI /></ViewBtn>
          <ZoomArea>
            <ZoomSign>−</ZoomSign>
            <ZoomLine><ZoomThumb /></ZoomLine>
            <ZoomSign>+</ZoomSign>
          </ZoomArea>
        </Views>
      </StatusBar>
    </Page>
  );
}
